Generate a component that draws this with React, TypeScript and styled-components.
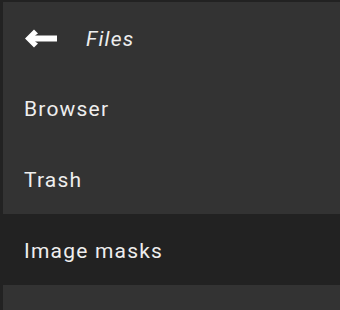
import React from "react";
import styled, { createGlobalStyle } from "styled-components";

const GlobalStyle = createGlobalStyle`
    html, body {
        margin: 0;
        padding: 0;
        background: #222222;
    }
`;

const Frame = styled.div`
    width: 340px;
    height: 310px;
    padding: 2px 0 0 3px;
    box-sizing: border-box;
    background: #222222;
    overflow: hidden;
`;

const Panel = styled.nav`
    display: flex;
    flex-direction: column;
    background: #333333;
    height: 100%;
    font-family: Roboto, "Liberation Sans", sans-serif;
`;

const Header = styled.div`
    display: flex;
    align-items: center;
    flex-shrink: 0;
    height: 70px;
    box-sizing: border-box;
    padding: 3px 0 0 22px;
    gap: 29px;
    color: #ffffff;
`;

const HeaderTitle = styled.span`
    font-size: 21px;
    font-style: italic;
    letter-spacing: 1.2px;
    color: #eeeeee;
`;

const Item = styled.div<{ $active?: boolean }>`
    display: flex;
    align-items: center;
    height: 71px;
    box-sizing: border-box;
    flex-shrink: 0;
    padding: 3px 0 0 21px;
    font-size: 21px;
    letter-spacing: 1.2px;
    color: #eeeeee;
    background: ${(p) => (p.$active ? "#222222" : "#333333")};
`;

const BackArrow = () => (
    <svg width="32" height="19" viewBox="0 0 32 19">
        <path
            d="M0 9.5 L9 0.5 L13 4.5 L10 6.5 L32 6.5 L32 12.5 L10 12.5 L13 14.5 L9 18.5 Z"
            fill="#ffffff"
        />
    </svg>
);

const items = ["Browser", "Trash", "Image masks", ""];

const App = () => {
    return (
        <>
            <GlobalStyle />
            <Frame>
                <Panel>
                    <Header>
                        <BackArrow />
                        <HeaderTitle>Files</HeaderTitle>
                    </Header>
                    {items.map((label, i) => (
                        <Item key={i} $active={label === "Image masks"}>
                            {label}
                        </Item>
                    ))}
                </Panel>
            </Frame>
        </>
    );
};

export default App;
